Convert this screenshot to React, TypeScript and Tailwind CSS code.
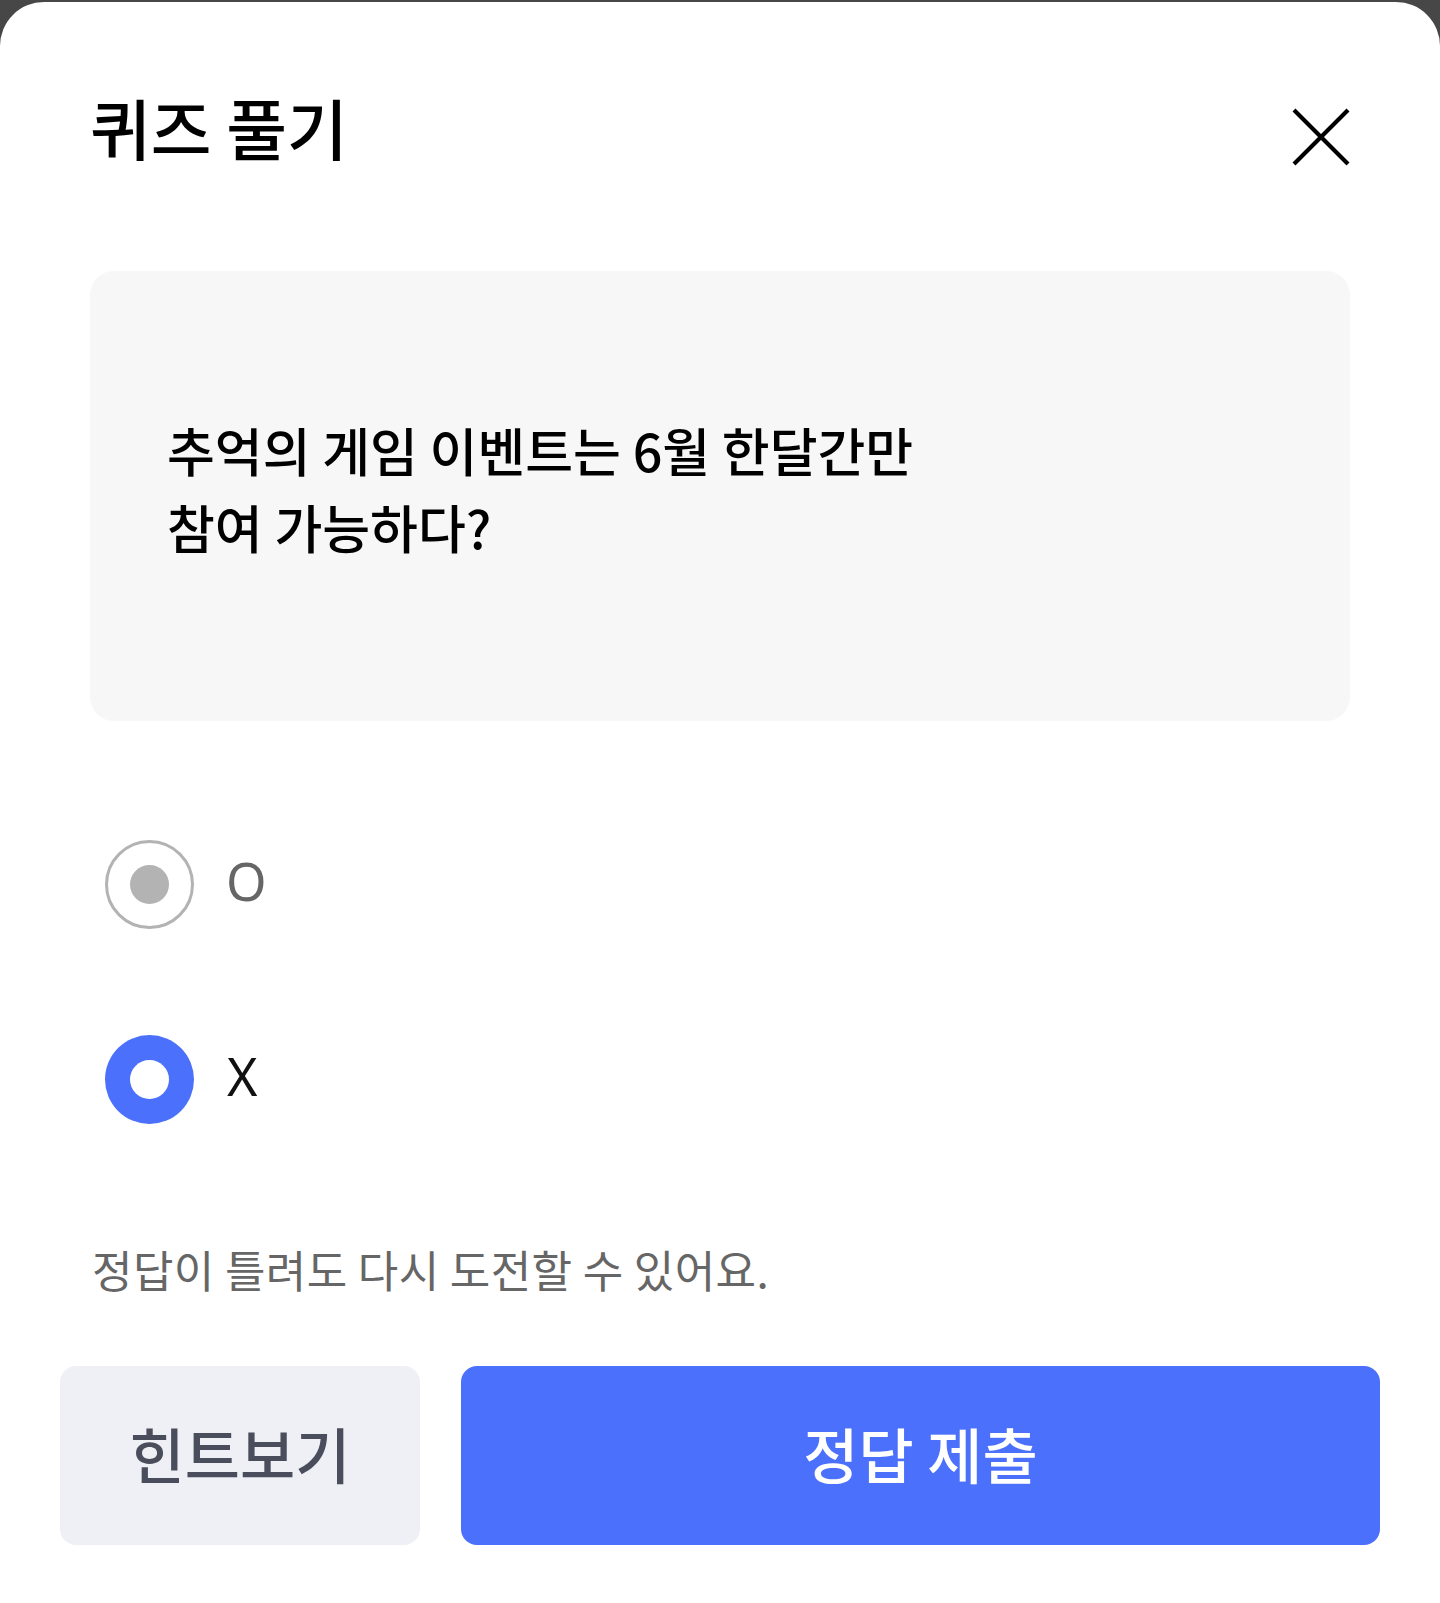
import React from "react";

const KR = { fontFamily: '"Noto Sans CJK KR", "Noto Sans", sans-serif' };

export default function App() {
  return (
    <div className="w-[1440px] h-[1603px] bg-[#474747] pt-[2px] overflow-hidden" style={KR}>
      <div className="h-[1601px] bg-white rounded-t-[44px] flex flex-col">
        {/* header */}
        <div className="flex items-start justify-between mt-[91px] pl-[90px] pr-[90px]">
          <h1 className="text-[66px] leading-[66px] font-medium tracking-[0px] text-black">퀴즈 풀기</h1>
          <svg width="58" height="58" viewBox="0 0 58 58" className="mt-[15px]">
            <path d="M2 2 L56 56 M56 2 L2 56" stroke="#000" strokeWidth="4.2" strokeLinecap="butt" />
          </svg>
        </div>

        {/* question card */}
        <div className="mx-[90px] mt-[105px] h-[450px] rounded-[24px] bg-[#f7f7f7] pt-[140px] pl-[77px]">
          <p className="text-[52px] leading-[77px] font-medium tracking-[0px] text-black">
            추억의 게임 이벤트는 6월 한달간만
            <br />
            참여 가능하다?
          </p>
        </div>

        {/* options */}
        <div className="flex flex-col pl-[105px] mt-[119px]">
          <div className="flex items-center h-[89px]">
            <div className="w-[89px] h-[89px] rounded-full border-[3px] border-[#b3b3b3] flex items-center justify-center">
              <div className="w-[39px] h-[39px] rounded-full bg-[#b3b3b3]" />
            </div>
            <span className="ml-[32px] mb-[8px] text-[52px] leading-[52px] text-[#666666]" style={{ fontFamily: '"Noto Sans", Roboto, sans-serif' }}>O</span>
          </div>
          <div className="flex items-center h-[89px] mt-[106px]">
            <div className="w-[89px] h-[89px] rounded-full bg-[#4b70fc] flex items-center justify-center">
              <div className="w-[39px] h-[39px] rounded-full bg-white" />
            </div>
            <span className="ml-[33px] mb-[8px] text-[52px] leading-[52px] text-[#111111]" style={{ fontFamily: '"Noto Sans", Roboto, sans-serif' }}>X</span>
          </div>
        </div>

        {/* hint */}
        <p className="ml-[92px] mt-[112px] text-[44px] leading-[66px] tracking-[0.4px] text-[#666666]">
          정답이 틀려도 다시 도전할 수 있어요.
        </p>

        {/* buttons */}
        <div className="flex gap-[41px] px-[60px] mt-[64px]">
          <button className="w-[360px] h-[179px] rounded-[16px] bg-[#eef0f5] text-[#4a4e5c] text-[60px] font-medium tracking-[0px] flex items-center justify-center pb-[6px]">
            힌트보기
          </button>
          <button className="flex-1 h-[179px] rounded-[16px] bg-[#4b70fc] text-white text-[60px] font-medium tracking-[0px] flex items-center justify-center pb-[6px]">
            정답 제출
          </button>
        </div>
      </div>
    </div>
  );
}
